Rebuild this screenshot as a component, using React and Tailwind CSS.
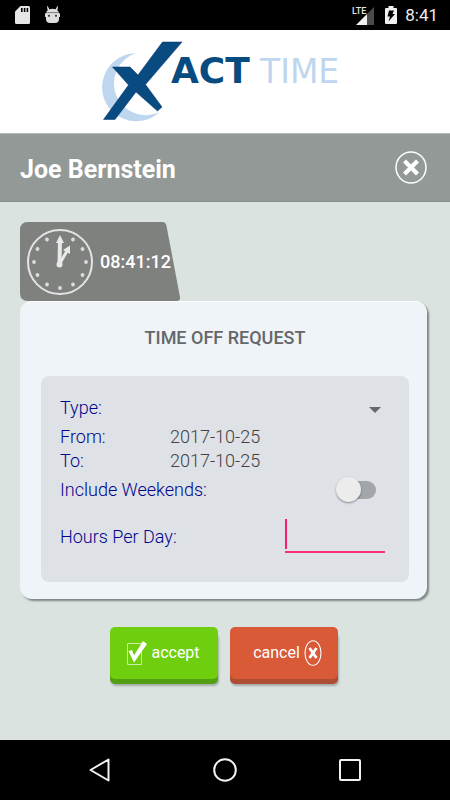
import { useState } from "react";

const TICKS = [1, 2, 3, 4, 5, 6, 7, 8, 9, 10, 11];

const StatusBar = () => (
  <div className="flex h-[30px] items-center justify-between bg-black pl-[15px] pr-3 text-[#ececec]">
    <div className="flex items-center gap-[15px]">
      <svg width="15" height="18" viewBox="0 0 15 18" fill="#e6e6e6" aria-hidden="true">
        <path d="M5.5 0H13.5Q15 0 15 1.5V16.5Q15 18 13.5 18H1.5Q0 18 0 16.5V5.5Z" />
        <path d="M6 2h1.6v4H6zM8.8 2h1.6v4H8.8zM11.6 2h1.6v4h-1.6z" fill="#000" />
      </svg>
      <svg width="15" height="18" viewBox="0 0 15 18" fill="#dedede" aria-hidden="true">
        <path d="M2.6 0L4.4 3.2Q7.5 2.2 10.6 3.2L12.4 0L13 .4L12.4 4.4Q14.2 5.6 14.4 8H.6Q.8 5.6 2.6 4.4L2 .4Z" />
        <path d="M0 7.5H15V11H14V13Q14 17 10 17H5Q1 17 1 13V11H0Z" />
        <path d="M1 6.6H14" stroke="#555" strokeWidth=".7" />
        <circle cx="4" cy="9.8" r="1.1" fill="#333" />
        <circle cx="11" cy="9.8" r="1.1" fill="#333" />
      </svg>
    </div>
    <div className="flex items-center">
      <svg width="23" height="19" viewBox="0 0 23 19" aria-hidden="true">
        <path d="M22 1V19H15V8Z" fill="#4a4a4a" />
        <path d="M15 8V19H4Z" fill="#f0f0f0" />
        <text x="0" y="8" fontSize="9" fontWeight="500" fill="#e6e6e6" fontFamily="Roboto, sans-serif">
          LTE
        </text>
      </svg>
      <svg className="ml-[10px]" width="12" height="18" viewBox="0 0 12 18" aria-hidden="true">
        <path d="M3.5 0h5v2H11q1 0 1 1v14q0 1-1 1H1q-1 0-1-1V3q0-1 1-1h2.5z" fill="#f0f0f0" />
        <path d="M4 4.5H9L7.5 8H10L3.5 15.5L5 10.5H2.5Z" fill="#000" />
      </svg>
      <span className="ml-2 text-[17px] leading-5">8:41</span>
    </div>
  </div>
);

const Logo = () => (
  <div className="flex h-[104px] justify-center border-b border-[#b5b8b7] bg-white pt-[10px]">
    <svg width="246" height="84" viewBox="0 0 246 84" role="img" aria-label="Xact Time">
      <path d="M34 13.3A34 34 0 1 0 57.5 72A31.7 31.7 0 1 1 34 13.3Z" fill="#bfd6ef" />
      <path
        d="M60.5 2H80L43.5 44.5L60 67L55.5 71L34 52L13 79.5H1.5L26.5 45L10.5 27H28L36 35Z"
        fill="#084b80"
        stroke="#0a2f73"
        strokeWidth=".5"
      />
      <g fontFamily="'DejaVu Sans', sans-serif">
        <text x="69" y="43" fontSize="36" fontWeight="700" fill="#084b80">
          ACT
        </text>
        <text x="158" y="43" fontSize="33" fill="#bfd6ef">
          TIME
        </text>
      </g>
    </svg>
  </div>
);

const CloseGlyph = () => (
  <svg width="32" height="33" viewBox="0 0 32 33" fill="none" stroke="#fff" aria-hidden="true">
    <ellipse cx="16" cy="16.5" rx="15" ry="15.5" strokeWidth="1.5" />
    <path d="M9.5 10L22.5 23M22.5 10L9.5 23" strokeWidth="4.2" />
  </svg>
);

const Header = ({ name }) => (
  <header className="flex h-[68px] items-center justify-between border-b border-[#858c89] bg-[#939996] pl-5 pr-[23px]">
    <h1 className="pt-1 text-[25px] leading-8 font-bold text-white">{name}</h1>
    <button type="button" aria-label="Close">
      <CloseGlyph />
    </button>
  </header>
);

const ClockTab = ({ time }) => (
  <div className="relative h-[79px] w-[161px]">
    <svg className="absolute inset-0" width="161" height="79" viewBox="0 0 161 79" aria-hidden="true">
      <path
        d="M8 0H142Q146 0 146.5 4L160 75Q160.5 79 157 79H8Q0 79 0 71V8Q0 0 8 0Z"
        fill="#7f817f"
      />
    </svg>
    <div className="relative flex h-full items-center gap-[7px] pl-[7px]">
      <svg width="66" height="66" viewBox="0 0 66 66" fill="none" aria-hidden="true">
        <circle cx="33" cy="33" r="32" stroke="#e4e4e4" strokeWidth="2" />
        {TICKS.map((n) => (
          <circle key={n} cx="33" cy="7" r="1.9" fill="#dcdcdc" transform={`rotate(${n * 30} 33 33)`} />
        ))}
        <path d="M32.5 36L33 11" stroke="#e9e9e9" strokeWidth="4" />
        <path d="M33 6L37 14H29Z" fill="#e9e9e9" />
        <path d="M32.5 35L40 22" stroke="#e9e9e9" strokeWidth="3" />
        <path d="M43 16.5V25L36 21Z" fill="#e9e9e9" />
        <circle cx="32.5" cy="35.5" r="3" fill="#e9e9e9" />
      </svg>
      <time className="text-[18px] leading-6 font-medium text-white">{time}</time>
    </div>
  </div>
);

const Row = ({ className, children }) => (
  <div className={`flex items-center justify-between ${className}`}>{children}</div>
);

const RequestForm = () => {
  const [weekends, setWeekends] = useState(false);
  const [hours, setHours] = useState("");

  return (
    <div className="rounded-lg bg-[#dee1e6] pt-[15px] pr-6 pb-[15px] pl-[19px] text-[18px] leading-6 font-light text-[#00048c]">
      <Row className="h-[34px]">
        <label htmlFor="type">Type:</label>
        <div className="relative w-44">
          <select id="type" className="block h-8 w-full appearance-none bg-transparent pr-6 text-[#555]">
            <option value="" />
            <option value="vacation">Vacation</option>
            <option value="sick">Sick</option>
          </select>
          <svg
            className="pointer-events-none absolute top-[15px] right-1"
            width="12"
            height="6"
            viewBox="0 0 12 6"
            aria-hidden="true"
          >
            <path d="M0 0H12L6 6Z" fill="#66676b" />
          </svg>
        </div>
      </Row>
      <dl>
        <div className="flex">
          <dt className="w-[110px]">From:</dt>
          <dd className="text-[#404244]">2017-10-25</dd>
        </div>
        <div className="flex">
          <dt className="w-[110px]">To:</dt>
          <dd className="text-[#404244]">2017-10-25</dd>
        </div>
      </dl>
      <Row className="h-[34px]">
        <label htmlFor="weekends">Include Weekends:</label>
        <input
          id="weekends"
          type="checkbox"
          role="switch"
          checked={weekends}
          onChange={(e) => setWeekends(e.target.checked)}
          className="relative mr-[9px] h-[18px] w-9 appearance-none rounded-full bg-[#a2a6a9] before:absolute before:-top-1 before:-left-1 before:size-[25px] before:rounded-full before:bg-[#ececec] before:shadow-[0_1px_2px_rgba(0,0,0,0.4)] checked:before:left-[15px]"
        />
      </Row>
      <Row className="h-[60px]">
        <label htmlFor="hours">Hours Per Day:</label>
        <div className="relative">
          <input
            id="hours"
            inputMode="decimal"
            value={hours}
            onChange={(e) => setHours(e.target.value)}
            className="peer block h-8 w-[100px] border-b-2 border-[#fa2a7c] bg-transparent pl-1 text-[#555] outline-none"
          />
          <span className="absolute bottom-1 left-0 h-[30px] w-0.5 bg-[#fa1a74] peer-focus:hidden" />
        </div>
      </Row>
    </div>
  );
};

const Actions = () => (
  <div className="mt-7 flex justify-center gap-3 text-[16px] leading-6 text-white">
    <button
      type="button"
      className="flex h-[52px] w-[108px] items-center justify-center gap-1 rounded-[5px] bg-[#6fcf0e] shadow-[0_5px_0_#539f14,1px_7px_2px_#a5ada9]"
    >
      <svg width="20" height="25" viewBox="0 0 20 25" fill="none" aria-hidden="true">
        <path d="M.5 2.5H14.5V23.5H.5Z" stroke="#c9efa3" />
        <path d="M1.5 10L5 9L7 14.5L16 0L20 3L7 21.5Z" fill="#fff" />
      </svg>
      accept
    </button>
    <button
      type="button"
      className="flex h-[52px] w-[108px] items-center justify-center gap-1 rounded-[5px] bg-[#d85a37] pl-2 shadow-[0_5px_0_#ac4d34,1px_7px_2px_#a5ada9]"
    >
      cancel
      <svg width="18" height="26" viewBox="0 0 18 26" fill="none" stroke="#fff" aria-hidden="true">
        <ellipse cx="9" cy="13" rx="8" ry="12.3" strokeWidth="1.1" />
        <path d="M5.5 8L12.5 18M12.5 8L5.5 18" strokeWidth="2.8" />
      </svg>
    </button>
  </div>
);

const NavBar = () => (
  <nav className="flex h-[60px] items-center justify-center gap-[101px] bg-black">
    <button type="button" aria-label="Back">
      <svg width="24" height="24" viewBox="0 0 24 24" fill="none" stroke="#f2f2f2" strokeWidth="2" strokeLinejoin="round">
        <path d="M20.5 1.5V22.5L2.5 12Z" />
      </svg>
    </button>
    <button type="button" aria-label="Home">
      <svg width="24" height="24" viewBox="0 0 24 24" fill="none" stroke="#f2f2f2" strokeWidth="2">
        <circle cx="12" cy="12" r="10.8" />
      </svg>
    </button>
    <button type="button" aria-label="Recent apps">
      <svg width="24" height="24" viewBox="0 0 24 24" fill="none" stroke="#f2f2f2" strokeWidth="2">
        <rect x="2" y="2" width="20" height="20" rx="1" />
      </svg>
    </button>
  </nav>
);

const App = () => (
  <div className="flex min-h-screen flex-col bg-[#dae3e0] font-[Roboto,sans-serif]">
    <StatusBar />
    <Logo />
    <Header name="Joe Bernstein" />
    <main className="flex-1 pt-5 pr-[23px] pl-5">
      <ClockTab time="08:41:12" />
      <section className="rounded-xl border-t border-white bg-[#eff4f8] pr-[18px] pb-[17px] pl-[21px] shadow-[2px_2px_2px_#7f8684]">
        <h2 className="pt-6 pb-[26px] text-center text-[18px] leading-6 font-medium text-[#666769]">
          TIME OFF REQUEST
        </h2>
        <RequestForm />
      </section>
      <Actions />
    </main>
    <NavBar />
  </div>
);

export default App;
